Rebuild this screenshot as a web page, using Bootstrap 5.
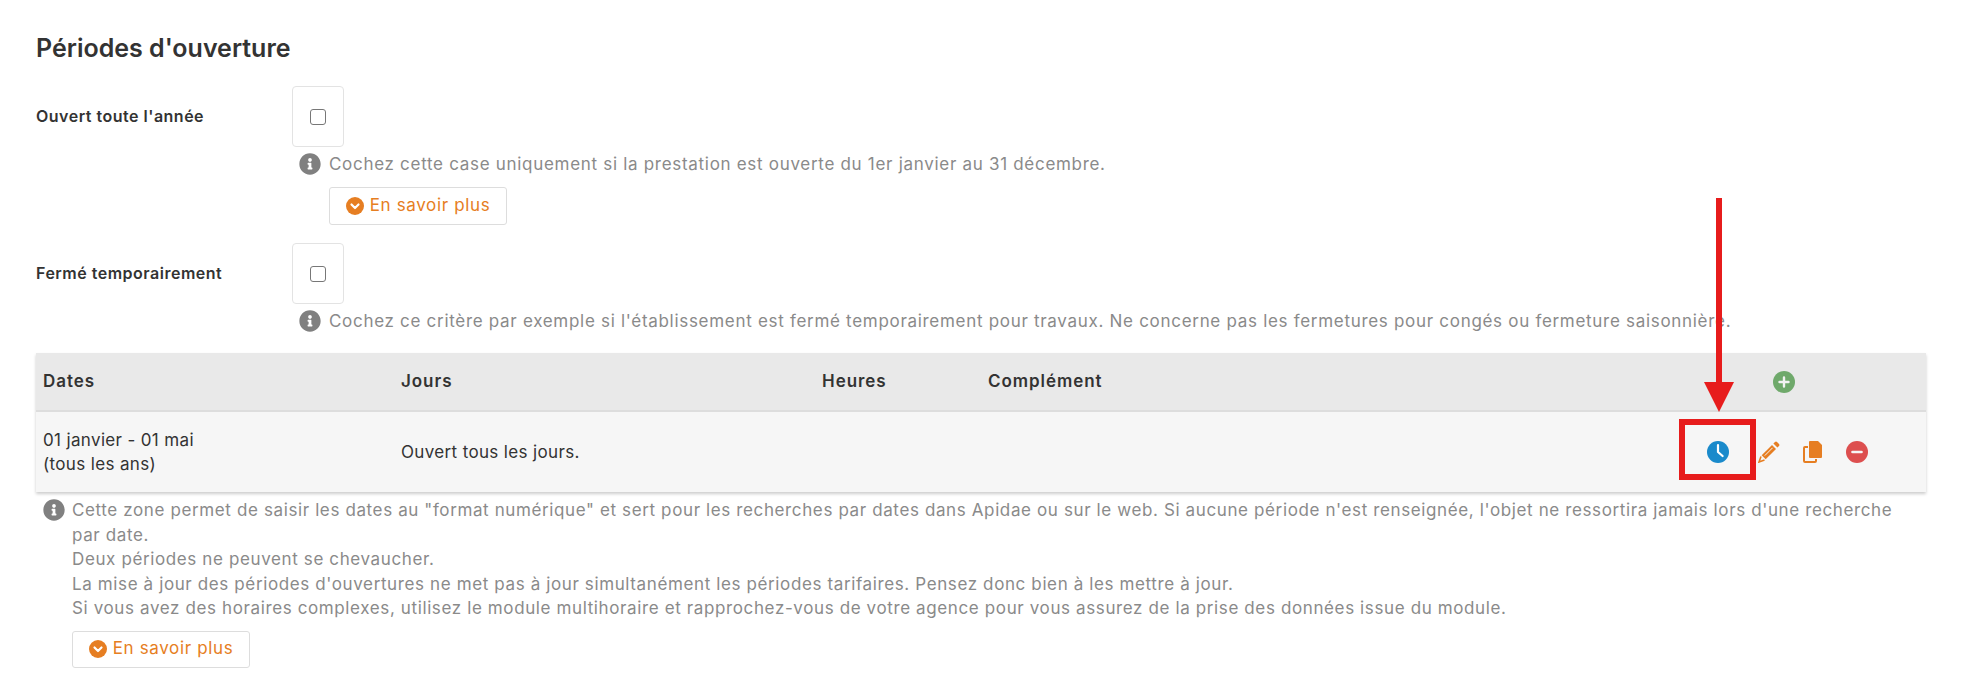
<!doctype html>
<html lang="fr"><head><meta charset="utf-8"><title>Périodes d'ouverture</title>
<link href="https://cdn.jsdelivr.net/npm/bootstrap@5.3.0/dist/css/bootstrap.min.css" rel="stylesheet">
<style>
body{font-family:Inter,"Open Sans","Liberation Sans",sans-serif;font-size:17px;letter-spacing:.35px;color:#333;background:#fff;height:673px;overflow:hidden;position:relative}
.pg{padding:0 43px 0 36px}
.ttl{font-size:25px;font-weight:600;color:#333;line-height:30px;margin:0;padding-top:33px;height:86px;letter-spacing:0}
.lbl{width:256px;font-size:16px;font-weight:600;line-height:24px;padding-top:18px;color:#333;flex:none;letter-spacing:.5px}
.cbx{width:52px;height:61px;border:1px solid #e3e3e3;border-radius:4px}
.cbx .form-check-input{width:16px;height:16px;margin:0;border:1px solid #777;border-radius:3px}
.hlp{color:#8a8a8a;line-height:24.5px;font-size:17px;letter-spacing:.62px}
.hlp svg{flex:none}
.hint1{padding:5px 0 0 7px;gap:8px;height:30px;width:1600px;margin-left:256px;letter-spacing:.7px}
.ico-i{width:22px;height:22px;fill:#808080;margin-top:1px}
.more{display:inline-flex;align-items:center;justify-content:center;gap:6px;color:#e67e22;border:1px solid #ddd;border-radius:3px;background:#fff;font-size:17px;padding:0;width:178px;height:38px;letter-spacing:.65px}
.more svg{width:18px;height:18px}
.more:hover{color:#e67e22;border-color:#ddd}
.b1{margin:10px 0 0 293px}
.sec2{margin-top:18px}
.tblw{width:1890px;box-shadow:0 2px 3px rgba(0,0,0,.2);margin-top:19px}
.tb{margin:0;table-layout:fixed;width:1890px;--bs-table-bg:transparent;color:#333}
.tb th{background:#e9e9e9;height:58px;padding:0 0 0 7px;font-weight:600;font-size:17px;letter-spacing:.95px;vertical-align:middle;border-bottom:2px solid #ddd}
.tb td{background:#f6f6f6;height:81px;padding:0 0 0 7px;vertical-align:middle;line-height:24px;font-size:17px;border:0}
.acts{display:flex;align-items:center}
.act{width:44px;display:flex;justify-content:center;align-items:center}
.act svg{width:22px;height:22px}
.sp{margin-left:7px}
.plusb{margin-left:66px}
.note{padding:6px 0 0 7px;gap:7px;width:1890px}
.b2wrap{margin-top:10px}
.b2wrap .more{height:37px}
.over{position:absolute;pointer-events:none}
.rbox{left:1679px;top:419px;width:77px;height:61px;border:6px solid #e71c1c}
.arr{left:1704px;top:198px;width:30px;height:214px}
</style></head><body>
<div class="pg">
<h4 class="ttl">Périodes d'ouverture</h4>

<div class="d-flex">
  <div class="lbl">Ouvert toute l'année</div>
  <div class="cbx d-flex align-items-center justify-content-center"><input class="form-check-input" type="checkbox" aria-label="Ouvert toute l'année"></div>
</div>
<div class="hlp d-flex hint1"><svg class="ico-i" viewBox="0 0 512 512"><path d="M256 8C119.043 8 8 119.083 8 256c0 136.997 111.043 248 248 248s248-111.003 248-248C504 119.083 392.957 8 256 8zm0 110c23.196 0 42 18.804 42 42s-18.804 42-42 42-42-18.804-42-42 18.804-42 42-42zm56 254c0 6.627-5.373 12-12 12h-88c-6.627 0-12-5.373-12-12v-24c0-6.627 5.373-12 12-12h12v-64h-12c-6.627 0-12-5.373-12-12v-24c0-6.627 5.373-12 12-12h64c6.627 0 12 5.373 12 12v100h12c6.627 0 12 5.373 12 12v24z"/></svg><span>Cochez cette case uniquement si la prestation est ouverte du 1er janvier au 31 décembre.</span></div>
<div><a class="btn more b1" href="#"><svg viewBox="0 0 18 18"><circle cx="9" cy="9" r="9" fill="#e67e22"/><path d="M5.5 7.5 9 11l3.5-3.5" fill="none" stroke="#fff" stroke-width="2.2" stroke-linecap="round" stroke-linejoin="round"/></svg>En savoir plus</a></div>

<div class="d-flex sec2">
  <div class="lbl">Fermé temporairement</div>
  <div class="cbx d-flex align-items-center justify-content-center"><input class="form-check-input" type="checkbox" aria-label="Fermé temporairement"></div>
</div>
<div class="hlp d-flex hint1"><svg class="ico-i" viewBox="0 0 512 512"><path d="M256 8C119.043 8 8 119.083 8 256c0 136.997 111.043 248 248 248s248-111.003 248-248C504 119.083 392.957 8 256 8zm0 110c23.196 0 42 18.804 42 42s-18.804 42-42 42-42-18.804-42-42 18.804-42 42-42zm56 254c0 6.627-5.373 12-12 12h-88c-6.627 0-12-5.373-12-12v-24c0-6.627 5.373-12 12-12h12v-64h-12c-6.627 0-12-5.373-12-12v-24c0-6.627 5.373-12 12-12h64c6.627 0 12 5.373 12 12v100h12c6.627 0 12 5.373 12 12v24z"/></svg><span>Cochez ce critère par exemple si l'établissement est fermé temporairement pour travaux. Ne concerne pas les fermetures pour congés ou fermeture saisonnière.</span></div>

<div class="tblw">
<table class="table tb">
<colgroup><col style="width:358px"><col style="width:421px"><col style="width:166px"><col style="width:715px"><col></colgroup>
<thead><tr><th>Dates</th><th>Jours</th><th>Heures</th><th>Complément</th>
<th class="p-0"><div class="acts"><a class="act plusb" href="#"><svg viewBox="0 0 22 22"><circle cx="11" cy="11" r="11" fill="#6fa96b"/><path d="M11 6.5v9M6.5 11h9" stroke="#f2f2f2" stroke-width="2.4" stroke-linecap="round"/></svg></a></div></th></tr></thead>
<tbody><tr><td>01 janvier - 01 mai<br>(tous les ans)</td><td>Ouvert tous les jours.</td><td></td><td></td>
<td class="p-0"><div class="acts">
<a class="act" href="#"><svg viewBox="0 0 22 22"><circle cx="11" cy="11" r="11" fill="#1a8acb"/><path d="M11 4.2V11l4.6 4" fill="none" stroke="#fff" stroke-width="2.2" stroke-linecap="round" stroke-linejoin="round"/></svg></a>
<a class="act sp" href="#"><svg viewBox="0 0 22 22"><path d="M3.7 14.3 14 4l4 4L7.7 18.3Z" fill="#e67e22"/><path d="M6.8 14.6 14.6 6.8" stroke="#f6f6f6" stroke-width="1"/><path d="M3 15.5 1 21l5.5-2" fill="none" stroke="#e67e22" stroke-width="1.6"/><path d="M15.4 2.6 17 1q1-.8 2 0l2 2q.8 1 0 2l-1.6 1.6Z" fill="#e67e22"/></svg></a>
<a class="act" href="#"><svg viewBox="0 0 20 22"><path d="M5 6H2a1 1 0 0 0-1 1v13a1 1 0 0 0 1 1h10a1 1 0 0 0 1-1v-2" fill="none" stroke="#e67e22" stroke-width="2"/><path d="M7 0h8l4 4v12a1 1 0 0 1-1 1H7a1 1 0 0 1-1-1V1a1 1 0 0 1 1-1Z" fill="#e67e22"/></svg></a>
<a class="act" href="#"><svg viewBox="0 0 22 22"><circle cx="11" cy="11" r="11" fill="#dd4f4f"/><path d="M6.5 11h9" stroke="#f6f6f6" stroke-width="2.6" stroke-linecap="round"/></svg></a>
</div></td></tr></tbody>
</table>
</div>

<div class="hlp d-flex note"><svg class="ico-i" viewBox="0 0 512 512"><path d="M256 8C119.043 8 8 119.083 8 256c0 136.997 111.043 248 248 248s248-111.003 248-248C504 119.083 392.957 8 256 8zm0 110c23.196 0 42 18.804 42 42s-18.804 42-42 42-42-18.804-42-42 18.804-42 42-42zm56 254c0 6.627-5.373 12-12 12h-88c-6.627 0-12-5.373-12-12v-24c0-6.627 5.373-12 12-12h12v-64h-12c-6.627 0-12-5.373-12-12v-24c0-6.627 5.373-12 12-12h64c6.627 0 12 5.373 12 12v100h12c6.627 0 12 5.373 12 12v24z"/></svg>
<div>Cette zone permet de saisir les dates au "format numérique" et sert pour les recherches par dates dans Apidae ou sur le web. Si aucune période n'est renseignée, l'objet ne ressortira jamais lors d'une recherche<br>par date.<br>Deux périodes ne peuvent se chevaucher.<br>La mise à jour des périodes d'ouvertures ne met pas à jour simultanément les périodes tarifaires. Pensez donc bien à les mettre à jour.<br>Si vous avez des horaires complexes, utilisez le module multihoraire et rapprochez-vous de votre agence pour vous assurez de la prise des données issue du module.
<div class="b2wrap"><a class="btn more" href="#"><svg viewBox="0 0 18 18"><circle cx="9" cy="9" r="9" fill="#e67e22"/><path d="M5.5 7.5 9 11l3.5-3.5" fill="none" stroke="#fff" stroke-width="2.2" stroke-linecap="round" stroke-linejoin="round"/></svg>En savoir plus</a></div>
</div></div>
</div>
<div class="over rbox"></div>
<svg class="over arr" viewBox="0 0 30 214"><rect x="12" y="0" width="6" height="186" fill="#e71c1c"/><polygon points="0,184 30,184 15,214" fill="#e71c1c"/></svg>
</body></html>
